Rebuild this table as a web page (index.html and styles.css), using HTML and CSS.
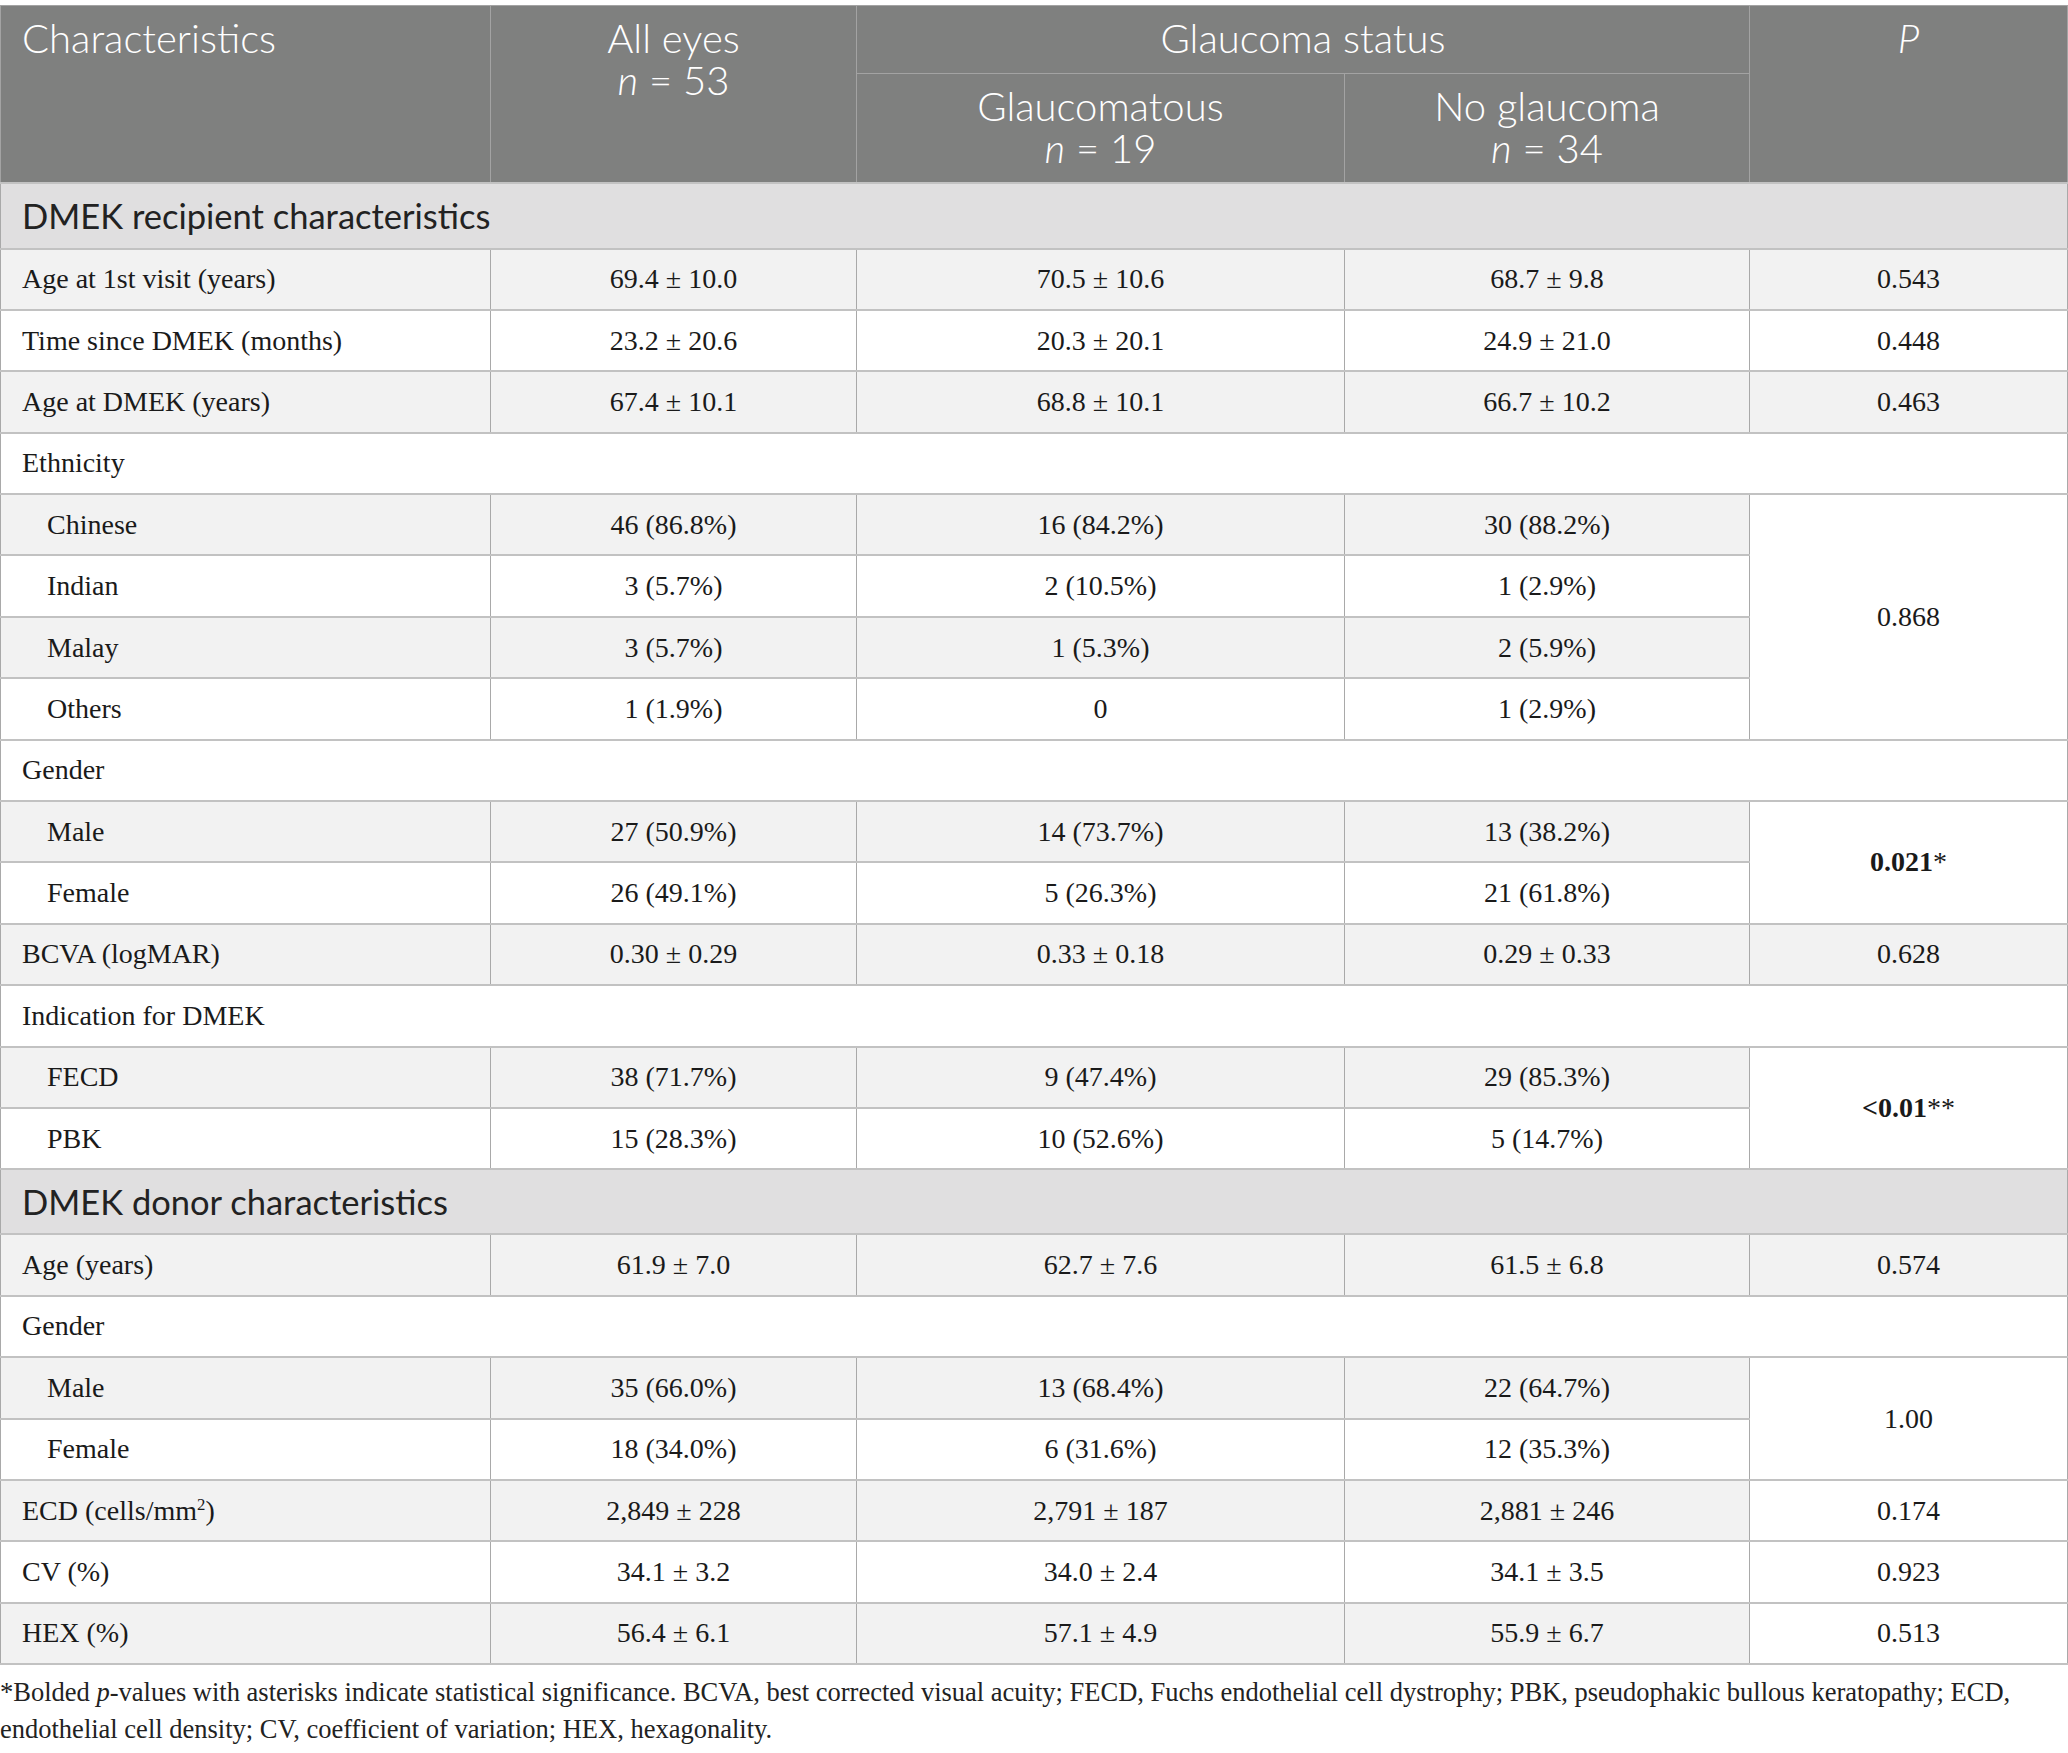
FILE: index.html
```html
<!DOCTYPE html>
<html lang="en">
<head>
<meta charset="utf-8">
<title>Table</title>
<link rel="stylesheet" href="styles.css">
</head>
<body>
<table class="data">
  <colgroup>
    <col class="c1"><col class="c2"><col class="c3"><col class="c4"><col class="c5">
  </colgroup>
  <thead>
    <tr class="h1">
      <th rowspan="2" class="left">Characteristics</th>
      <th rowspan="2"><span class="ln">All eyes</span><span class="ln"><i>n</i> = 53</span></th>
      <th colspan="2">Glaucoma status</th>
      <th rowspan="2"><i>P</i></th>
    </tr>
    <tr class="h2">
      <th><span class="ln">Glaucomatous</span><span class="ln"><i>n</i> = 19</span></th>
      <th><span class="ln">No glaucoma</span><span class="ln"><i>n</i> = 34</span></th>
    </tr>
  </thead>
  <tbody>
    <tr class="section"><td colspan="5">DMEK recipient characteristics</td></tr>
    <tr class="g"><td>Age at 1st visit (years)</td><td>69.4 ± 10.0</td><td>70.5 ± 10.6</td><td>68.7 ± 9.8</td><td>0.543</td></tr>
    <tr><td>Time since DMEK (months)</td><td>23.2 ± 20.6</td><td>20.3 ± 20.1</td><td>24.9 ± 21.0</td><td>0.448</td></tr>
    <tr class="g"><td>Age at DMEK (years)</td><td>67.4 ± 10.1</td><td>68.8 ± 10.1</td><td>66.7 ± 10.2</td><td>0.463</td></tr>
    <tr><td colspan="5">Ethnicity</td></tr>
    <tr class="g"><td class="ind">Chinese</td><td>46 (86.8%)</td><td>16 (84.2%)</td><td>30 (88.2%)</td><td rowspan="4" class="w">0.868</td></tr>
    <tr><td class="ind">Indian</td><td>3 (5.7%)</td><td>2 (10.5%)</td><td>1 (2.9%)</td></tr>
    <tr class="g"><td class="ind">Malay</td><td>3 (5.7%)</td><td>1 (5.3%)</td><td>2 (5.9%)</td></tr>
    <tr><td class="ind">Others</td><td>1 (1.9%)</td><td>0</td><td>1 (2.9%)</td></tr>
    <tr><td colspan="5">Gender</td></tr>
    <tr class="g"><td class="ind">Male</td><td>27 (50.9%)</td><td>14 (73.7%)</td><td>13 (38.2%)</td><td rowspan="2" class="w"><b>0.021</b>*</td></tr>
    <tr><td class="ind">Female</td><td>26 (49.1%)</td><td>5 (26.3%)</td><td>21 (61.8%)</td></tr>
    <tr class="g"><td>BCVA (logMAR)</td><td>0.30 ± 0.29</td><td>0.33 ± 0.18</td><td>0.29 ± 0.33</td><td>0.628</td></tr>
    <tr><td colspan="5">Indication for DMEK</td></tr>
    <tr class="g"><td class="ind">FECD</td><td>38 (71.7%)</td><td>9 (47.4%)</td><td>29 (85.3%)</td><td rowspan="2" class="w"><b>&lt;0.01</b>**</td></tr>
    <tr><td class="ind">PBK</td><td>15 (28.3%)</td><td>10 (52.6%)</td><td>5 (14.7%)</td></tr>
    <tr class="section s2"><td colspan="5">DMEK donor characteristics</td></tr>
    <tr class="g"><td>Age (years)</td><td>61.9 ± 7.0</td><td>62.7 ± 7.6</td><td>61.5 ± 6.8</td><td>0.574</td></tr>
    <tr><td colspan="5">Gender</td></tr>
    <tr class="g"><td class="ind">Male</td><td>35 (66.0%)</td><td>13 (68.4%)</td><td>22 (64.7%)</td><td rowspan="2" class="w">1.00</td></tr>
    <tr><td class="ind">Female</td><td>18 (34.0%)</td><td>6 (31.6%)</td><td>12 (35.3%)</td></tr>
    <tr class="g"><td>ECD (cells/mm<sup>2</sup>)</td><td>2,849 ± 228</td><td>2,791 ± 187</td><td>2,881 ± 246</td><td class="w">0.174</td></tr>
    <tr><td>CV (%)</td><td>34.1 ± 3.2</td><td>34.0 ± 2.4</td><td>34.1 ± 3.5</td><td>0.923</td></tr>
    <tr class="g"><td>HEX (%)</td><td>56.4 ± 6.1</td><td>57.1 ± 4.9</td><td>55.9 ± 6.7</td><td class="w">0.513</td></tr>
  </tbody>
</table>
<p class="note">*Bolded <i>p</i>-values with asterisks indicate statistical significance. BCVA, best corrected visual acuity; FECD, Fuchs endothelial cell dystrophy; PBK, pseudophakic bullous keratopathy; ECD, endothelial cell density; CV, coefficient of variation; HEX, hexagonality.</p>
</body>
</html>
```
FILE: styles.css
```css
html, body {
  margin: 0;
  padding: 0;
  background: #ffffff;
}
body {
  padding-top: 5px;
  font-family: "Liberation Serif", "Times New Roman", serif;
  color: #1a1a1a;
}
.data {
  width: 2067px;
  border-collapse: collapse;
  table-layout: fixed;
  font-size: 28px;
}
.c1 { width: 490px; }
.c2 { width: 366px; }
.c3 { width: 488px; }
.c4 { width: 405px; }
.c5 { width: 318px; }

.data th {
  background: #7f807f;
  color: #ffffff;
  font-family: Lato, "Open Sans", sans-serif;
  font-weight: 300;
  font-size: 40px;
  line-height: 43px;
  vertical-align: top;
  text-align: center;
  border: 1px solid #a3a3a3;
  padding: 11px 10px 0;
}
.data th .ln { display: block; height: 42px; }
.data th.left { text-align: left; padding-left: 21px; }
.data thead tr.h1 { height: 67.5px; }
.data thead tr.h2 { height: 109.5px; }

.data td {
  border: 2px solid #c2c2c2;
  border-left-width: 1px;
  border-right-width: 1px;
  border-left-color: #a9a9a9;
  border-right-color: #a9a9a9;
  padding: 0 10px;
  text-align: center;
  vertical-align: middle;
  line-height: 32px;
  background: #ffffff;
}
.data td:first-child { text-align: left; padding-left: 21px; }
.data td.ind { padding-left: 46px; }
.data tbody tr { height: 61.4px; }
.data tr.g td { background: #f2f2f2; }
.data tr.g td.w, .data td.w { background: #ffffff; }

.data tr.section { height: 66px; }
.data tr.s2 { height: 65px; }
.data tr.section td {
  background: #e0dfe0;
  font-family: Lato, "Open Sans", sans-serif;
  font-weight: 400;
  font-size: 34.5px;
  color: #222222;
}
.data b { font-weight: 700; }
.data sup { font-size: 60%; line-height: 0; vertical-align: super; }

.note {
  margin: 9px 0 0;
  font-size: 26.5px;
  line-height: 37px;
  color: #222222;
  width: 2040px;
}
```
